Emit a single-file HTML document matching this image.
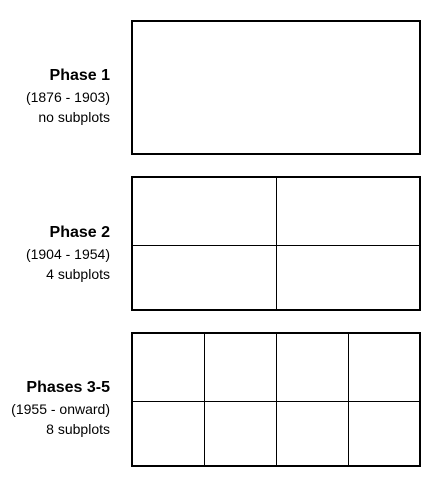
<!DOCTYPE html>
<html><head><style>
body{margin:0;width:445px;height:488px;background:#fff;position:relative;font-family:"Liberation Sans",sans-serif;color:#000}
.b{position:absolute;left:131px;width:286px;height:131px;border:2px solid #000}
.v{position:absolute;top:0;bottom:0;width:1px;background:#000}
.h{position:absolute;left:0;right:0;height:1px;background:#000}
.t{position:absolute;right:335px;text-align:right;font-size:14px;line-height:20px;white-space:nowrap}
.t b{font-size:16px;display:block;line-height:22px}
</style></head><body>
<div class="b" style="top:20px"></div>
<div class="b" style="top:176px"><div class="v" style="left:143px"></div><div class="h" style="top:67px"></div></div>
<div class="b" style="top:332px"><div class="v" style="left:71px"></div><div class="v" style="left:143px"></div><div class="v" style="left:215px"></div><div class="h" style="top:67px"></div></div>
<div class="t" style="top:65px"><b>Phase 1</b>(1876 - 1903)<br>no subplots</div>
<div class="t" style="top:222px"><b>Phase 2</b>(1904 - 1954)<br>4 subplots</div>
<div class="t" style="top:377px"><b>Phases 3-5</b>(1955 - onward)<br>8 subplots</div>
</body></html>
